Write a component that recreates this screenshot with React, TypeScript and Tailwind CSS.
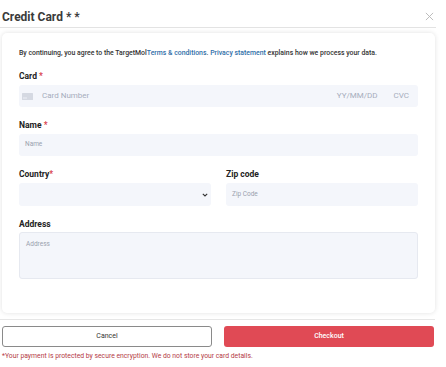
import React from "react";

export default function App() {
  return (
    <div className="w-[446px] h-[367px] bg-white overflow-hidden relative" style={{ fontFamily: "Roboto, 'Liberation Sans', sans-serif" }}>
      <div className="flex items-center justify-between pl-[2px] pr-[2px] h-[28px] pt-[6px] border-b border-[#e3e3e3] w-[436px]">
        <div className="text-[12px] font-bold text-[#3a3a3a] leading-none">Credit Card * *</div>
        <svg width="9" height="9" viewBox="0 0 10 10" className="-mt-[1px]">
          <path d="M1 1L9 9M9 1L1 9" stroke="#b5b5b5" strokeWidth="1" />
        </svg>
      </div>
      <div className="mt-[5px] ml-[2px] w-[433px] h-[280px] rounded-[5px] bg-white shadow-[0_0_5px_rgba(0,0,0,0.12)] px-[17px] pt-[16px]">
        <div className="text-[6.9px] font-medium text-[#333] leading-[9px] whitespace-nowrap">
          By continuing, you agree to the TargetMol<span className="text-[#2f6ea8]">Terms &amp; conditions</span>. <span className="text-[#2f6ea8]">Privacy statement</span> explains how we process your data.
        </div>
        <div className="mt-[13px] text-[8.5px] font-bold text-[#222] leading-[10px]">
          Card <span className="text-[#d9434e]">*</span>
        </div>
        <div className="mt-[4px] h-[22px] rounded-[3px] bg-[#f4f6fb] flex items-center pl-[3px] pr-[9px] text-[8px] text-[#a6adbb]">
          <svg width="11" height="7" viewBox="0 0 11 7">
            <rect x="0" y="0" width="11" height="7" rx="0.5" fill="#d5d9e2" />
            <rect x="1" y="4.5" width="4" height="1" fill="#eef0f5" />
          </svg>
          <span className="ml-[9px]">Card Number</span>
          <span className="ml-auto">YY/MM/DD</span>
          <span className="ml-[16px]">CVC</span>
        </div>
        <div className="mt-[13px] text-[8.5px] font-bold text-[#222] leading-[10px]">
          Name <span className="text-[#d9434e]">*</span>
        </div>
        <div className="mt-[4px] h-[22px] rounded-[3px] bg-[#f4f6fb] flex items-center pl-[6px] text-[6.5px] text-[#9aa1ae]">
          Name
        </div>
        <div className="mt-[13px] grid grid-cols-2 gap-x-[15px]">
          <div>
            <div className="text-[8.5px] font-bold text-[#222] leading-[10px]">
              Country<span className="text-[#d9434e]">*</span>
            </div>
            <div className="mt-[4px] h-[23px] rounded-[3px] bg-[#f4f6fb] flex items-center justify-end pr-[3px]">
              <svg width="6" height="4" viewBox="0 0 6 4">
                <path d="M0.8 0.8L3 3L5.2 0.8" stroke="#333" strokeWidth="1.1" fill="none" />
              </svg>
            </div>
          </div>
          <div>
            <div className="text-[8.5px] font-bold text-[#222] leading-[10px]">Zip code</div>
            <div className="mt-[4px] h-[23px] rounded-[3px] bg-[#f4f6fb] flex items-center pl-[6px] text-[6.5px] text-[#9aa1ae]">
              Zip Code
            </div>
          </div>
        </div>
        <div className="mt-[13px] text-[8.5px] font-bold text-[#222] leading-[10px]">Address</div>
        <div className="mt-[3px] h-[47px] rounded-[3px] bg-[#f4f6fb] border border-[#e6e9f0] pl-[6px] pt-[7px] text-[6.5px] text-[#9aa1ae] leading-[8px]">
          Address
        </div>
      </div>
      <div className="mt-[6px] w-[435px] h-[1px] bg-[#e6e6e6]" />
      <div className="mt-[6px] flex gap-[12px] pl-[2px] w-[436px]">
        <button className="w-[210px] h-[21px] rounded-[3px] border border-[#8a8a8a] bg-white text-[7px] text-[#333]">Cancel</button>
        <button className="w-[210px] h-[21px] rounded-[3px] bg-[#e04a55] text-[7px] font-medium text-white">Checkout</button>
      </div>
      <div className="mt-[5px] pl-[2px] text-[6.8px] text-[#b43a46] leading-[8px]">
        *Your payment is protected by secure encryption. We do not store your card details.
      </div>
    </div>
  );
}
